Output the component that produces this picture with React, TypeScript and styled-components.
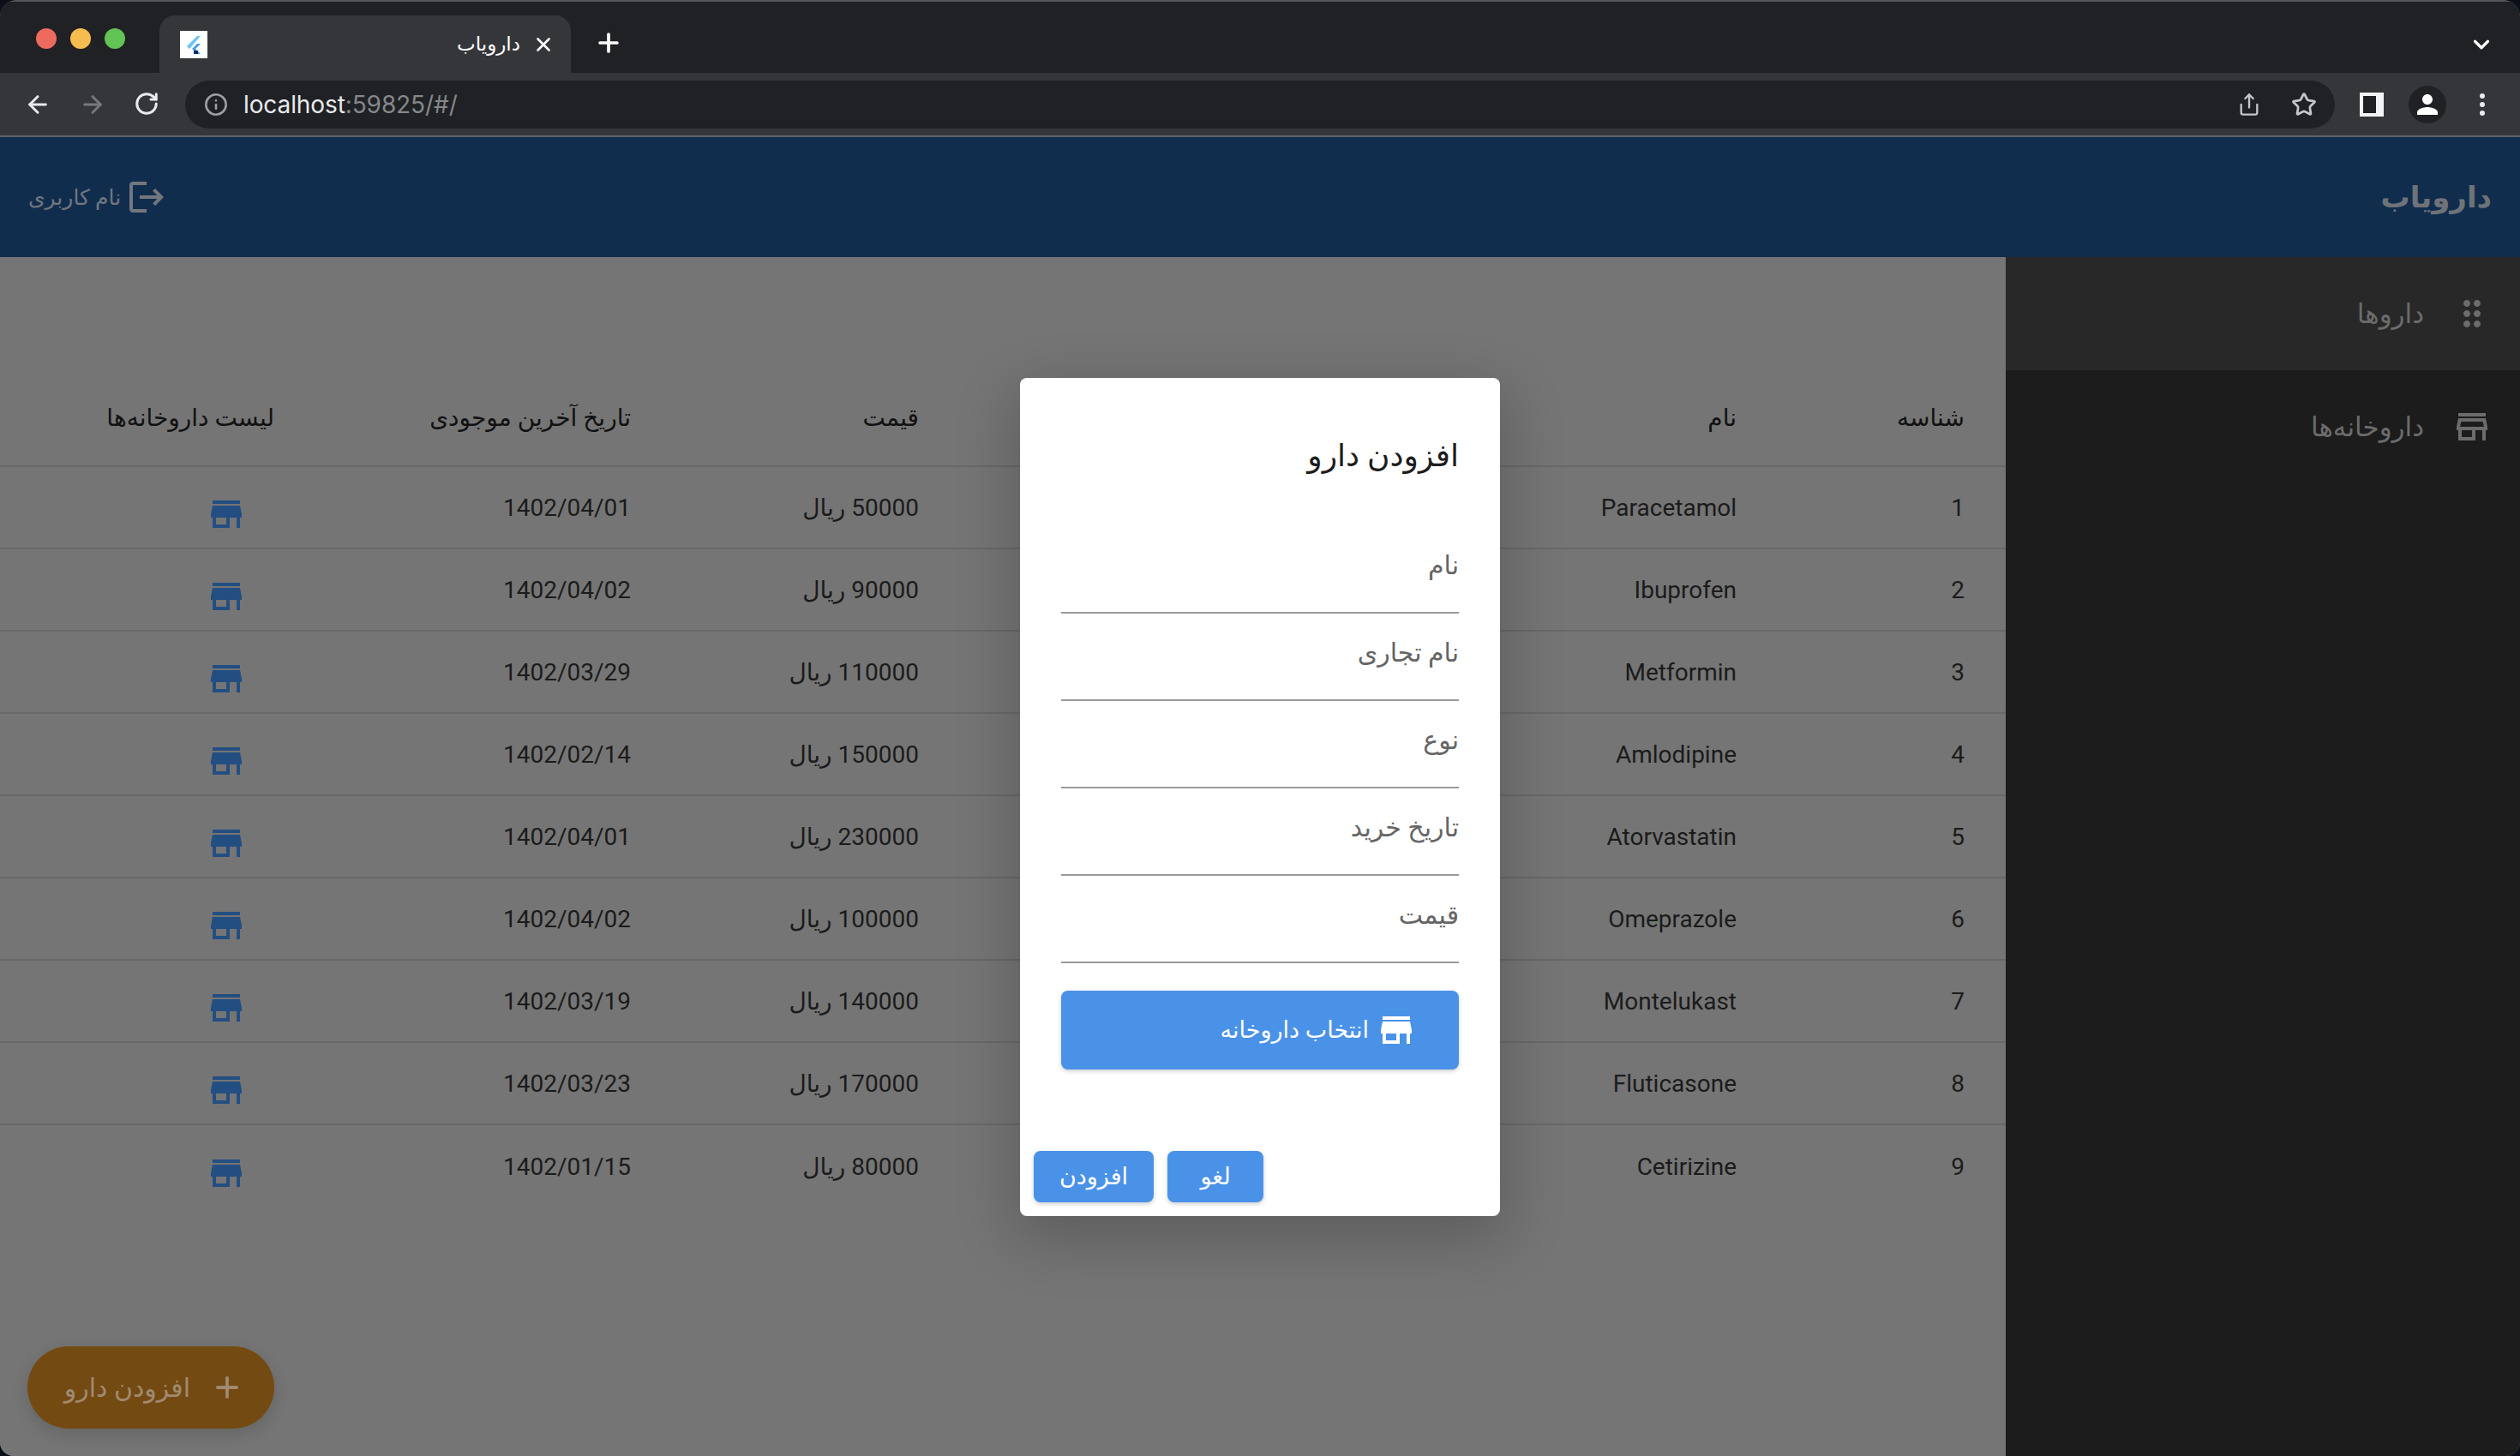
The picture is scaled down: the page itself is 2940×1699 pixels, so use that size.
import styled, { createGlobalStyle } from "styled-components";
import { ArrowLeft, ArrowRight, ChevronDown, Info, Plus, RotateCw, Share, Star, X } from "lucide-react";
import { MdDragIndicator, MdLogout, MdOutlineStore, MdPerson, MdStore } from "react-icons/md";

const GlobalStyle = createGlobalStyle`
  html, body {
    margin: 0;
    padding: 0;
    height: 100%;
    background: #0b0f18;
    font-family: Roboto, "DejaVu Sans", sans-serif;
  }
  * {
    box-sizing: border-box;
  }
`;

const Window = styled.div`
  position: relative;
  width: 2940px;
  height: 1699px;
  display: flex;
  flex-direction: column;
  overflow: hidden;
  border-radius: 20px 20px 16px 16px;
  background: #757575;
`;

const TabStrip = styled.div`
  height: 85px;
  flex: none;
  display: flex;
  align-items: flex-end;
  padding: 0 30px 0 42px;
  background: #202124;
  box-shadow: inset 0 2px 0 #55565a;
`;

const Lights = styled.div`
  display: flex;
  gap: 16px;
  align-self: flex-start;
  margin-top: 33px;
  margin-right: 40px;
`;

const Light = styled.span<{ $color: string }>`
  width: 24px;
  height: 24px;
  border-radius: 50%;
  background: ${(p) => p.$color};
`;

const Tab = styled.div`
  width: 480px;
  height: 67px;
  display: flex;
  align-items: center;
  padding: 0 19px 0 24px;
  border-radius: 18px 18px 0 0;
  background: #35363a;
  color: #fff;
`;

const Favicon = styled.svg`
  width: 32px;
  height: 32px;
  flex: none;
`;

const TabTitle = styled.span`
  margin-left: auto;
  margin-right: 14px;
  font-size: 23px;
  direction: rtl;
`;

const NewTab = styled.div`
  display: flex;
  align-self: center;
  margin: 14px 0 0 27px;
  color: #fff;
`;

const TabListToggle = styled.div`
  display: flex;
  margin: 0 0 18px auto;
  color: #fff;
`;

const Toolbar = styled.div`
  height: 75px;
  flex: none;
  display: flex;
  align-items: center;
  padding: 0 28px;
  background: #35363a;
  border-bottom: 2px solid #626367;
`;

const NavButton = styled.div<{ $muted?: boolean }>`
  width: 32px;
  height: 32px;
  display: flex;
  margin-right: 32px;
  color: ${(p) => (p.$muted ? "#77787b" : "#e8eaed")};
`;

const Omnibox = styled.div`
  width: 2508px;
  height: 56px;
  margin-left: -4px;
  display: flex;
  align-items: center;
  padding: 0 21px 0 22px;
  border-radius: 28px;
  background: #202124;
`;

const SiteInfo = styled.div`
  display: flex;
  color: #9aa0a6;
  margin-right: 18px;
`;

const Url = styled.div`
  font-family: Inter, Roboto, sans-serif;
  font-size: 28px;
  letter-spacing: -0.1px;
  color: #e8eaed;
  flex: 1;
`;

const UrlRest = styled.span`
  color: #85878b;
`;

const OmniboxAction = styled.div`
  display: flex;
  color: #c4c7ca;
  margin-left: 35px;
`;

const ToolbarActions = styled.div`
  display: flex;
  align-items: center;
  margin-left: 29px;
`;

const SidePanelIcon = styled.div`
  width: 28px;
  height: 28px;
  border: 4px solid #f1f3f4;
  border-right-width: 9px;
  background: #202124;
  margin-right: 29px;
`;

const Avatar = styled.div`
  width: 44px;
  height: 44px;
  display: flex;
  align-items: center;
  justify-content: center;
  border-radius: 50%;
  background: #202124;
  color: #fff;
  margin-right: 39px;
`;

const Kebab = styled.div`
  display: flex;
  flex-direction: column;
  gap: 4px;
`;

const KebabDot = styled.span`
  width: 6px;
  height: 6px;
  border-radius: 50%;
  background: #e8eaed;
`;

const AppBar = styled.header`
  height: 140px;
  flex: none;
  display: flex;
  direction: rtl;
  align-items: center;
  justify-content: space-between;
  padding: 0 33px;
  background: #112d4e;
`;

const Brand = styled.h1`
  margin: 0;
  font-size: 34px;
  font-weight: 700;
  color: #6f7378;
`;

const UserButton = styled.div`
  display: flex;
  align-items: center;
  gap: 6px;
  color: #72777e;
  font-size: 25px;
`;

const Body = styled.div`
  flex: 1;
  min-height: 0;
  display: flex;
  direction: rtl;
`;

const Sidebar = styled.nav`
  width: 600px;
  flex: none;
  background: #1c1c1c;
`;

const SideItem = styled.div<{ $active?: boolean }>`
  height: 132px;
  display: flex;
  align-items: center;
  gap: 32px;
  padding-right: 32px;
  font-size: 31px;
  color: #6c6c6c;
  background: ${(p) => (p.$active ? "#282828" : "transparent")};
`;

const Main = styled.main`
  position: relative;
  flex: 1;
  min-width: 0;
  padding-top: 132px;
  background: #757575;
`;

const Table = styled.div`
  display: flex;
  flex-direction: column;
`;

const TableRow = styled.div<{ $head?: boolean }>`
  height: ${(p) => (p.$head ? "113px" : "96px")};
  display: grid;
  grid-template-columns: 266px 954px 336px 416px 1fr;
  align-items: center;
  padding-right: 48px;
  border-bottom: 2px solid #686868;
  font-size: 28px;
  color: ${(p) => (p.$head ? "#111" : "#1b1b1b")};

  &:last-child {
    border-bottom: none;
  }
`;

const StoreLink = styled.div`
  display: flex;
  margin: 16px 32px 0 0;
  color: #234e82;
`;

const Fab = styled.div`
  position: absolute;
  left: 32px;
  bottom: 32px;
  width: 288px;
  height: 96px;
  display: flex;
  align-items: center;
  gap: 24px;
  padding-right: 36px;
  border-radius: 48px;
  font-size: 30px;
  color: #a08a70;
  background: #744a13;
  box-shadow: 0 6px 20px rgba(0, 0, 0, 0.14);
`;

const DialogLayer = styled.div`
  position: absolute;
  inset: 160px 0 0 0;
  display: flex;
  align-items: center;
  justify-content: center;
  direction: rtl;
`;

const Dialog = styled.section`
  width: 560px;
  height: 978px;
  display: flex;
  flex-direction: column;
  padding: 63px 48px 16px;
  border-radius: 8px;
  background: #fff;
  box-shadow: 0 22px 70px 8px rgba(0, 0, 0, 0.2);
`;

const DialogTitle = styled.h2`
  margin: 0 0 54px;
  height: 56px;
  font-size: 36px;
  line-height: 56px;
  font-weight: 400;
  color: #1d1d1d;
`;

const Field = styled.div`
  height: 102px;
  flex: none;
  display: flex;
  align-items: center;
  padding-bottom: 8px;
  border-bottom: 2px solid #9a9a9a;
  font-size: 30px;
  color: #656565;
`;

const PickButton = styled.div`
  height: 92px;
  flex: none;
  display: flex;
  align-items: center;
  gap: 8px;
  margin-top: 32px;
  padding-right: 49px;
  border-radius: 8px;
  font-size: 27px;
  color: #fff;
  background: #4a92e8;
  box-shadow: 0 2px 5px rgba(0, 0, 0, 0.2);
`;

const DialogActions = styled.div`
  display: flex;
  gap: 16px;
  margin: auto -32px 0 -32px;
  justify-content: flex-end;
`;

const ActionButton = styled.div<{ $width: number }>`
  width: ${(p) => p.$width}px;
  height: 60px;
  display: flex;
  align-items: center;
  justify-content: center;
  border-radius: 8px;
  font-size: 27px;
  color: #fff;
  background: #4a92e8;
  box-shadow: 0 2px 5px rgba(0, 0, 0, 0.2);
`;

const drugs = [
  ["1", "Paracetamol", "50000 ریال", "1402/04/01"],
  ["2", "Ibuprofen", "90000 ریال", "1402/04/02"],
  ["3", "Metformin", "110000 ریال", "1402/03/29"],
  ["4", "Amlodipine", "150000 ریال", "1402/02/14"],
  ["5", "Atorvastatin", "230000 ریال", "1402/04/01"],
  ["6", "Omeprazole", "100000 ریال", "1402/04/02"],
  ["7", "Montelukast", "140000 ریال", "1402/03/19"],
  ["8", "Fluticasone", "170000 ریال", "1402/03/23"],
  ["9", "Cetirizine", "80000 ریال", "1402/01/15"],
];

const fields = ["نام", "نام تجاری", "نوع", "تاریخ خرید", "قیمت"];

const App = () => {
  return (
    <Window>
      <GlobalStyle />
      <TabStrip>
        <Lights>
          <Light $color="#ee6a5f" />
          <Light $color="#f5bd4f" />
          <Light $color="#61c454" />
        </Lights>
        <Tab>
          <Favicon viewBox="0 0 32 32">
            <rect width="32" height="32" fill="#fff" />
            <path d="M20 6 8 18l3 3L24 6z" fill="#6fc3f0" />
            <path d="M20 15l-6 6 6 6h4l-6-6 6-6z" fill="#4a9be0" />
            <rect x="16" y="23" width="5" height="4" fill="#0d2c6b" />
          </Favicon>
          <TabTitle>دارویاب</TabTitle>
          <X size={26} strokeWidth={2.4} />
        </Tab>
        <NewTab>
          <Plus size={34} strokeWidth={2.6} />
        </NewTab>
        <TabListToggle>
          <ChevronDown size={30} strokeWidth={2.6} />
        </TabListToggle>
      </TabStrip>
      <Toolbar>
        <NavButton>
          <ArrowLeft size={32} strokeWidth={2.2} />
        </NavButton>
        <NavButton $muted>
          <ArrowRight size={32} strokeWidth={2.2} />
        </NavButton>
        <NavButton>
          <RotateCw size={30} strokeWidth={2.4} />
        </NavButton>
        <Omnibox>
          <SiteInfo>
            <Info size={28} strokeWidth={2.2} />
          </SiteInfo>
          <Url>
            localhost<UrlRest>:59825/#/</UrlRest>
          </Url>
          <OmniboxAction>
            <Share size={28} strokeWidth={2} />
          </OmniboxAction>
          <OmniboxAction>
            <Star size={30} strokeWidth={2.2} />
          </OmniboxAction>
        </Omnibox>
        <ToolbarActions>
          <SidePanelIcon />
          <Avatar>
            <MdPerson size={36} />
          </Avatar>
          <Kebab>
            <KebabDot />
            <KebabDot />
            <KebabDot />
          </Kebab>
        </ToolbarActions>
      </Toolbar>
      <AppBar>
        <Brand>دارویاب</Brand>
        <UserButton>
          <MdLogout size={48} />
          <span>نام کاربری</span>
        </UserButton>
      </AppBar>
      <Body>
        <Sidebar>
          <SideItem $active>
            <MdDragIndicator size={48} />
            <span>داروها</span>
          </SideItem>
          <SideItem>
            <MdOutlineStore size={48} />
            <span>داروخانه‌ها</span>
          </SideItem>
        </Sidebar>
        <Main>
          <Table>
            <TableRow $head>
              <span>شناسه</span>
              <span>نام</span>
              <span>قیمت</span>
              <span>تاریخ آخرین موجودی</span>
              <span>لیست داروخانه‌ها</span>
            </TableRow>
            {drugs.map((d) => (
              <TableRow key={d[0]}>
                <span>{d[0]}</span>
                <span>{d[1]}</span>
                <span>{d[2]}</span>
                <span>{d[3]}</span>
                <StoreLink>
                  <MdStore size={48} />
                </StoreLink>
              </TableRow>
            ))}
          </Table>
          <Fab>
            <Plus size={38} strokeWidth={2.4} />
            <span>افزودن دارو</span>
          </Fab>
        </Main>
      </Body>
      <DialogLayer>
        <Dialog>
          <DialogTitle>افزودن دارو</DialogTitle>
          {fields.map((f) => (
            <Field key={f}>{f}</Field>
          ))}
          <PickButton>
            <MdStore size={48} />
            <span>انتخاب داروخانه</span>
          </PickButton>
          <DialogActions>
            <ActionButton $width={112}>لغو</ActionButton>
            <ActionButton $width={140}>افزودن</ActionButton>
          </DialogActions>
        </Dialog>
      </DialogLayer>
    </Window>
  );
};

export default App;
